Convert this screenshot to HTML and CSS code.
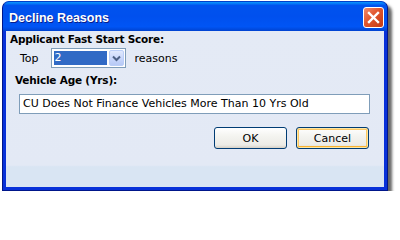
FILE: index.html
```html
<!DOCTYPE html>
<html>
<head>
<meta charset="utf-8">
<link rel="stylesheet" href="styles.css">
</head>
<body>
<div class="shot">
  <div class="window">
    <div class="titlebar">
      <span class="title">Decline Reasons</span>
      <div class="close">
        <svg width="13" height="13" viewBox="0 0 13 13"><path d="M2 2 L11 11 M11 2 L2 11" stroke="#fff" stroke-width="2.4" stroke-linecap="square"/></svg>
      </div>
    </div>
    <div class="content">
      <div class="label">Applicant Fast Start Score:</div>
      <div class="toprow">
        <span class="text">Top</span>
        <div class="combo">
          <div class="combo-value"><span class="sel">2</span></div>
          <div class="combo-btn">
            <svg width="9" height="7" viewBox="0 0 9 7"><path d="M1 1.5 L4.5 5 L8 1.5" fill="none" stroke="#4d6185" stroke-width="2"/></svg>
          </div>
        </div>
        <span class="text">reasons</span>
      </div>
      <div class="label label2">Vehicle Age (Yrs):</div>
      <div class="textbox">CU Does Not Finance Vehicles More Than 10 Yrs Old</div>
      <div class="buttons">
        <div class="btn">OK</div>
        <div class="btn btn-default">Cancel</div>
      </div>
    </div>
  </div>
</div>
</body>
</html>
```
FILE: styles.css
```css
html, body {
  margin: 0;
  padding: 0;
  background: #ffffff;
}
body {
  font-family: "DejaVu Sans", sans-serif;
  font-size: 11px;
  color: #000;
}
.shot {
  padding: 1px 0 0 2px;
}
.window {
  width: 384px;
  border: 1px solid #00168a;
  border-top-color: #0040c8;
  border-radius: 7px 7px 0 0;
  box-shadow: 4px 4px 3px rgba(0,0,0,0.6);
  display: flex;
  flex-direction: column;
  background: #0831d9;
}
.titlebar {
  height: 29px;
  border-radius: 6px 6px 0 0;
  background: linear-gradient(to bottom, #0997ff 0%, #0053ee 12%, #0050ee 50%, #0055f5 85%, #0043d0 100%);
  display: flex;
  align-items: center;
  justify-content: space-between;
  padding: 0 3px 0 6px;
}
.title {
  color: #fff;
  font-family: "Liberation Sans", sans-serif;
  font-weight: bold;
  font-size: 12.5px;
  text-shadow: 1px 1px 0 #0a1e8a;
  margin-top: 2px;
}
.close {
  width: 19px;
  height: 19px;
  border: 1px solid #fff;
  border-radius: 3px;
  background: linear-gradient(135deg, #f08a6c 0%, #e0552e 45%, #c33a14 100%);
  display: flex;
  align-items: center;
  justify-content: center;
  margin-top: 2px;
}
.close svg { display: block; }
.content {
  margin: 0 3px 3px 3px;
  height: 156px;
  background: linear-gradient(to bottom, #e4eaf5 0%, #e3e9f5 86%, #d9e5f3 87%, #d9e5f3 100%);
  padding: 2px 0 0 4px;
  box-sizing: border-box;
}
.label {
  font-family: "DejaVu Sans", sans-serif;
  font-weight: bold;
  font-size: 10.5px;
  line-height: 13px;
  letter-spacing: -0.2px;
}
.toprow {
  display: flex;
  align-items: center;
  margin: 2px 0 0 10px;
  height: 20px;
}
.text {
  font-family: "DejaVu Sans", sans-serif;
  font-size: 11px;
}
.combo {
  width: 73px;
  height: 18px;
  border: 1px solid #7f9db9;
  background: #fff;
  display: flex;
  margin: 0 9px 0 12px;
}
.combo-value {
  flex: 1;
  padding: 2px;
  display: flex;
}
.sel {
  flex: 1;
  background: #316ac5;
  color: #fff;
  font-family: "DejaVu Sans", sans-serif;
  font-size: 11px;
  line-height: 14px;
  padding-left: 1px;
}
.combo-btn {
  width: 15px;
  margin: 1px 1px 1px 0;
  border: 1px solid #bacef8;
  border-radius: 2px;
  background: linear-gradient(to bottom, #e0e9fd 0%, #c6d5fb 60%, #b7c9f5 100%);
  display: flex;
  align-items: center;
  justify-content: center;
  box-sizing: border-box;
}
.combo-btn svg { display: block; }
.label2 {
  margin: 6px 0 0 5px;
}
.textbox {
  width: 346px;
  height: 18px;
  border: 1px solid #7f9db9;
  background: #fff;
  margin: 7px 0 0 9px;
  font-family: "DejaVu Sans", sans-serif;
  font-size: 11px;
  line-height: 18px;
  padding-left: 3px;
  box-sizing: content-box;
  white-space: nowrap;
  overflow: hidden;
}
.buttons {
  display: flex;
  justify-content: flex-end;
  gap: 9px;
  margin: 13px 15px 0 0;
}
.btn {
  width: 71px;
  height: 20px;
  border: 1px solid #003c74;
  border-radius: 3px;
  background: linear-gradient(to bottom, #ffffff 0%, #f4f4f0 40%, #ecebe6 85%, #d6d0c5 100%);
  display: flex;
  align-items: center;
  justify-content: center;
  font-family: "DejaVu Sans", sans-serif;
  font-size: 11px;
  box-sizing: content-box;
}
.btn-default {
  box-shadow: inset 0 0 0 1px #ffe7a2, inset 0 -1px 0 1px #f8b230, inset 0 0 0 2px #fcc865;
}
```
